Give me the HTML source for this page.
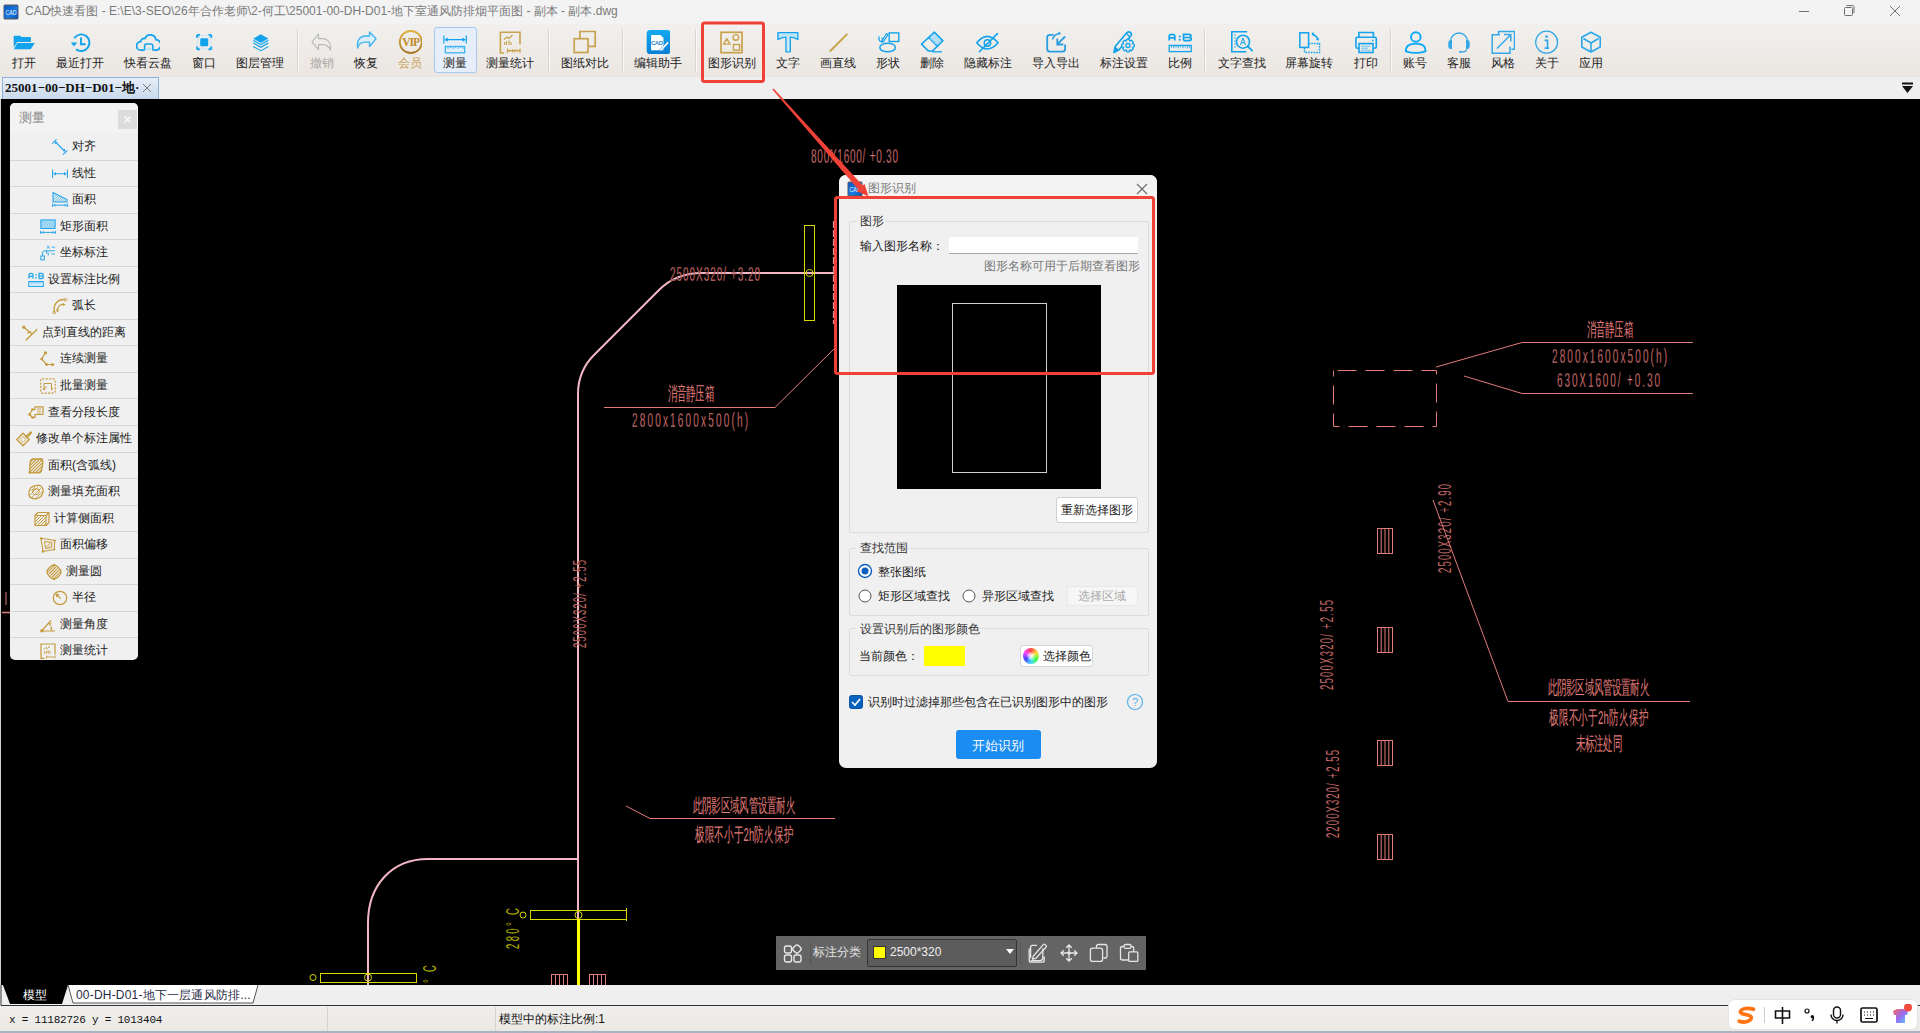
<!DOCTYPE html><html><head><meta charset="utf-8"><style>
*{box-sizing:border-box;margin:0;padding:0}
html,body{width:1920px;height:1033px;overflow:hidden;background:#000;font-family:"Liberation Sans",sans-serif;}
.abs{position:absolute}
#title{left:0;top:0;width:1920px;height:24px;background:#f3f3f3}
#tb{left:0;top:24px;width:1920px;height:53px;background:linear-gradient(#f1f0ee,#ebe6e1)}
.lbl{position:absolute;top:56px;font-size:12px;line-height:15px;color:#222;white-space:nowrap;transform:translateX(-50%)}
.ico{position:absolute;top:30px;width:24px;height:24px}
.sep{position:absolute;top:29px;width:1px;height:43px;background:#d8d4d0;box-shadow:1px 0 0 #faf8f6}
#tabbar{left:0;top:77px;width:1920px;height:22px;background:#efefef}
#canvas{left:1px;top:99px;width:1919px;height:886px;background:#000;overflow:hidden}
#btabs{left:0;top:985px;width:1920px;height:21px;background:#efefef}
#status{left:0;top:1006px;width:1920px;height:27px;background:linear-gradient(#f0efed,#ebe8e4)}
.row{position:absolute;left:0;width:128px;height:26.45px;border-bottom:2px solid #d9d9d9;background:#f0f0f0;font-size:13px;color:#222;white-space:nowrap}
.row span.t{position:absolute;top:5px}
.cadt{font-family:"Liberation Sans",sans-serif;fill:#e0736e}
</style></head><body>
<div id="title" class="abs">
<svg class="abs" style="left:3px;top:4px" width="16" height="16" viewBox="0 0 16 16"><defs><linearGradient id="ti" x1="0" y1="0" x2="1" y2="1"><stop offset="0" stop-color="#0a58c0"/><stop offset=".6" stop-color="#1a7ae0"/><stop offset="1" stop-color="#0a50b0"/></linearGradient></defs><rect x="0.5" y="0.5" width="15" height="15" rx="1.5" fill="#5a5a5a"/><rect x="1.3" y="1.6" width="13.4" height="12.8" fill="url(#ti)"/><text x="8" y="11" font-size="6.5" text-anchor="middle" fill="#e8f0ff" font-family="Liberation Sans" textLength="11" lengthAdjust="spacingAndGlyphs">CAD</text></svg>
<div class="abs" style="left:25px;top:3px;font-size:12px;line-height:17px;color:#7a7a7a;white-space:nowrap">CAD快速看图 - E:\E\3-SEO\26年合作老师\2-何工\25001-00-DH-D01-地下室通风防排烟平面图 - 副本 - 副本.dwg</div>
<svg class="abs" style="left:1790px;top:0" width="130" height="24" viewBox="1790 0 130 24" stroke="#6f6f6f" fill="none" stroke-width="1"><line x1="1799" y1="11.5" x2="1809" y2="11.5"/><rect x="1844.5" y="7.5" width="8" height="8" rx="1"/><path d="M1846.5 5.5h6a1.5 1.5 0 0 1 1.5 1.5v6"/><path d="M1890 6L1900 16M1900 6L1890 16"/></svg>
</div>
<div id="tb" class="abs"></div>
<div class="abs" style="left:434px;top:27px;width:43px;height:46px;border:1px solid #a8c8f0;border-radius:3px;background:#e6eff9"></div>
<div class="sep" style="left:297.0px"></div>
<div class="sep" style="left:547.5px"></div>
<div class="sep" style="left:621.5px"></div>
<div class="sep" style="left:695.0px"></div>
<div class="sep" style="left:1204.0px"></div>
<div class="sep" style="left:1390.0px"></div>
<svg class="ico" style="left:12px" viewBox="0 0 24 24"><path d="M1.7 7V6.5Q1.7 5.7 2.5 5.7H8.3L9.6 7H17.8Q18.9 7 18.9 8.2V12H5.2L1.7 17.5Z" fill="#12a3ec"/><path d="M5.4 13H22.9L18.7 19.3H1.8Z" fill="#12a3ec"/></svg>
<div class="lbl" style="left:24px;color:#222">打开</div>
<svg class="ico" style="left:68px" viewBox="0 0 24 24"><path d="M6.2 8.2A8.3 8.3 0 1 1 8 19.2" fill="none" stroke="#12a3ec" stroke-width="1.9"/><path d="M2.8 12.5H9.2L6 16.5Z" fill="#12a3ec"/><path d="M13 7.6V14.2H17.6" fill="none" stroke="#12a3ec" stroke-width="1.9"/></svg>
<div class="lbl" style="left:80px;color:#222">最近打开</div>
<svg class="ico" style="left:136px" viewBox="0 0 24 24"><path d="M7.5 20.2H5.2A4.3 4.3 0 0 1 4.6 11.6 3.8 3.8 0 0 1 9.1 8.4 5.6 5.6 0 0 1 19.8 9.6 5.3 5.3 0 0 1 19.5 20.2H18.2" fill="none" stroke="#12a3ec" stroke-width="1.8" stroke-linecap="round"/><path d="M8.6 20.5V16A2 2 0 0 1 10.6 14H14.8A2 2 0 0 1 16.8 16V20.5" fill="none" stroke="#12a3ec" stroke-width="1.6"/><rect x="9.3" y="17.6" width="6.8" height="2.4" fill="#bfe4f8"/></svg>
<div class="lbl" style="left:148px;color:#222">快看云盘</div>
<svg class="ico" style="left:192px" viewBox="0 0 24 24"><rect x="8.2" y="8.2" width="8" height="8" rx="1" fill="#12a3ec"/><path d="M5.2 8V6.2Q5.2 5.2 6.2 5.2H8M16.4 5.2H18.2Q19.2 5.2 19.2 6.2V8M19.2 16.4V18.2Q19.2 19.2 18.2 19.2H16.4M8 19.2H6.2Q5.2 19.2 5.2 18.2V16.4" fill="none" stroke="#12a3ec" stroke-width="2.2"/><path d="M6 6L8.5 8.5M18.4 6L16 8.5M18.4 18.4L16 16M6 18.4L8.5 16M7 5.6H17.4M5.6 7V17.4M18.8 7V17.4M7 18.8H17.4" stroke="#bfe4f8" stroke-width=".8"/></svg>
<div class="lbl" style="left:204px;color:#222">窗口</div>
<svg class="ico" style="left:248px" viewBox="0 0 24 24"><path d="M12.8 4.3L20.3 8.6 12.8 12.9 5.3 8.6Z" fill="#12a3ec"/><path d="M5.3 12.3L12.8 16.6 20.3 12.3 20.3 13.7 12.8 18 5.3 13.7Z" fill="#12a3ec"/><path d="M5.3 15.9L12.8 20.2 20.3 15.9 20.3 17.2 12.8 21.2 5.3 17.2Z" fill="#12a3ec"/><path d="M5.3 9.6L5.3 11 12.8 15.3 20.3 11 20.3 9.6 12.8 13.9Z" fill="#12a3ec"/></svg>
<div class="lbl" style="left:260px;color:#222">图层管理</div>
<svg class="ico" style="left:310px" viewBox="0 0 24 24"><path d="M2 11.8L8.5 4V8.6H12.5A7.8 7.8 0 0 1 20.5 16.6V20.5Q18.8 14.6 12.5 14.6H8.5V19.6Z" fill="none" stroke="#b8b8b8" stroke-width="1.1" stroke-linejoin="round"/></svg>
<div class="lbl" style="left:322px;color:#aaa">撤销</div>
<svg class="ico" style="left:354px" viewBox="0 0 24 24"><path d="M22 8.8L15.5 2V6H11.5A7.8 7.8 0 0 0 3.5 14V18Q5.2 12.2 11.5 12.2H15.5V16.5Z" fill="#d8eefa" stroke="#3fb2ee" stroke-width="1.3" stroke-linejoin="round"/></svg>
<div class="lbl" style="left:366px;color:#222">恢复</div>
<svg class="ico" style="left:398px" viewBox="0 0 24 24"><defs><linearGradient id="vg" x1="0" y1="0" x2="0" y2="1"><stop offset="0" stop-color="#e0b040"/><stop offset="1" stop-color="#a87828"/></linearGradient></defs><circle cx="12.8" cy="12" r="11" fill="none" stroke="url(#vg)" stroke-width="1.8"/><text x="12.6" y="16.3" font-size="11.5" text-anchor="middle" fill="#c08a28" font-family="Liberation Serif" font-weight="bold" letter-spacing="-1">VIP</text></svg>
<div class="lbl" style="left:410px;color:#c9a45a">会员</div>
<svg class="ico" style="left:442.5px" viewBox="0 0 24 24"><path d="M0.9 5.5V13.4M23.3 5.5V13.4M2 9.7H22.2" stroke="#12a3ec" stroke-width="1.2" fill="none"/><path d="M1.4 9.7L4.8 7.6V11.8ZM22.8 9.7L19.4 7.6V11.8Z" fill="#12a3ec"/><rect x="2.3" y="16.5" width="19.3" height="6.3" fill="none" stroke="#3ab4f0" stroke-width="1.3"/><path d="M5 16.5V19M7.5 16.5V18M10 16.5V19M12.5 16.5V18M15 16.5V19M17.5 16.5V18M20 16.5V19" stroke="#3ab4f0" stroke-width=".9"/></svg>
<div class="lbl" style="left:454.5px;color:#222">测量</div>
<svg class="ico" style="left:498px" viewBox="0 0 24 24"><path d="M6 23H2.4V2.2H22V14.5" fill="none" stroke="#c9a24e" stroke-width="1.6"/><path d="M6 9.5L9 7 11 8.5 14.5 5" fill="none" stroke="#c9a24e" stroke-width="1.3"/><path d="M6.5 12V15M8.5 11V15M11 10.5V15M13 12V15" stroke="#c9a24e" stroke-width="1.1"/><path d="M9.5 18.5V23M22 18.5V23M10 20.7H21.5" stroke="#c9a24e" stroke-width="1.2"/><path d="M10.5 20.7L12.5 19.3V22.1ZM21 20.7L19 19.3V22.1Z" fill="#c9a24e"/><path d="M14.5 19V22.5M17 19V22.5" stroke="#c9a24e" stroke-width="1"/></svg>
<div class="lbl" style="left:510px;color:#222">测量统计</div>
<svg class="ico" style="left:573px" viewBox="0 0 24 24"><path d="M6.9 7.9V1.5H22.2V16.3H15.8" fill="none" stroke="#c9a24e" stroke-width="1.7"/><rect x="1.2" y="8.7" width="13.8" height="13.8" fill="none" stroke="#c9a24e" stroke-width="1.7"/></svg>
<div class="lbl" style="left:585px;color:#222">图纸对比</div>
<svg class="ico" style="left:645.5px" viewBox="0 0 24 24"><defs><linearGradient id="eg" x1="0" y1="0" x2="0" y2="1"><stop offset="0" stop-color="#12a8f0"/><stop offset="1" stop-color="#0a7fd6"/></linearGradient></defs><rect x=".7" y="0" width="23.8" height="24.2" rx="3.5" fill="url(#eg)"/><path d="M5.1 5H14.5L17.5 8V20.3H5.1Z" fill="#fff"/><text x="10.8" y="14.6" font-size="6" text-anchor="middle" fill="#2a86d0" font-family="Liberation Sans" font-weight="bold" letter-spacing="-.4">CAD</text><path d="M14 19.5L21.5 11.5 23 13 15.5 21H14Z" fill="#fff" stroke="#2a86d0" stroke-width=".6"/></svg>
<div class="lbl" style="left:657.5px;color:#222">编辑助手</div>
<svg class="ico" style="left:720px" viewBox="0 0 24 24"><rect x="1" y="2.3" width="21" height="20.4" fill="none" stroke="#c9a24e" stroke-width="1.7"/><path d="M3.6 14.1L6.8 8.6 10 14.1Z" fill="none" stroke="#c9a24e" stroke-width="1.4" stroke-linejoin="round"/><circle cx="15.8" cy="7.4" r="2.8" fill="none" stroke="#c9a24e" stroke-width="1.4"/><rect x="13.4" y="14.5" width="6.2" height="5.7" fill="none" stroke="#c9a24e" stroke-width="1.4"/></svg>
<div class="lbl" style="left:732px;color:#222">图形识别</div>
<svg class="ico" style="left:776px" viewBox="0 0 24 24"><path d="M1.9 2.6H21.9V9.6L20.6 8.8Q17.4 7.2 14.3 7.2V21.8H10V7.2Q6.9 7.2 3.3 8.8L1.9 9.6Z" fill="#bfe4f8" stroke="#12a3ec" stroke-width="1.3" stroke-linejoin="round"/><path d="M12.1 7.5V21.5" stroke="#fff" stroke-width=".8" opacity=".7"/></svg>
<div class="lbl" style="left:788px;color:#222">文字</div>
<svg class="ico" style="left:826px" viewBox="0 0 24 24"><path d="M4.3 21L20.9 4.4" stroke="#c6a24a" stroke-width="1.9" stroke-linecap="round"/></svg>
<div class="lbl" style="left:838px;color:#222">画直线</div>
<svg class="ico" style="left:876px" viewBox="0 0 24 24"><rect x="13.2" y="2.9" width="9.6" height="8.6" fill="none" stroke="#12a3ec" stroke-width="1.4"/><ellipse cx="11.6" cy="17.5" rx="7.8" ry="4.3" fill="none" stroke="#12a3ec" stroke-width="1.5"/><path d="M3 7C2.5 10 4 11.8 5.5 11.5 7 11.2 6.5 9 6 8" fill="none" stroke="#12a3ec" stroke-width="1.3" stroke-linecap="round"/><path d="M6.2 10.5L10.5 3.5 12 4.5 7.7 11.5 6 12.2Z" fill="none" stroke="#12a3ec" stroke-width="1.2" stroke-linejoin="round"/></svg>
<div class="lbl" style="left:888px;color:#222">形状</div>
<svg class="ico" style="left:920px" viewBox="0 0 24 24"><path d="M14.3 2.2L22.8 10.7 12.4 21.1H8.5L1.5 14.1Z" fill="none" stroke="#12a3ec" stroke-width="1.5" stroke-linejoin="round"/><path d="M14.3 2.2L22.8 10.7 17.2 16.3 8.7 7.8Z" fill="#9fd6f5" stroke="#12a3ec" stroke-width="1.3"/><path d="M10.8 5.7L19.3 14.2M12.5 4L21 12.5M16 4.5L9.7 10.8M18 6.5L11.7 12.8M20 8.5L13.7 14.8" stroke="#e8f6fd" stroke-width=".5"/><path d="M12 21.8H22" stroke="#12a3ec" stroke-width="1.3"/></svg>
<div class="lbl" style="left:932px;color:#222">删除</div>
<svg class="ico" style="left:976px" viewBox="0 0 24 24"><path d="M0.8 12.7Q11.3 0 22 12.7 11.3 25.2 0.8 12.7Z" fill="none" stroke="#12a3ec" stroke-width="1.6"/><circle cx="11.4" cy="13" r="3.2" fill="none" stroke="#12a3ec" stroke-width="1.5"/><path d="M3.4 21.8L21.4 3.6" stroke="#12a3ec" stroke-width="1.6" stroke-linecap="round"/></svg>
<div class="lbl" style="left:988px;color:#222">隐藏标注</div>
<svg class="ico" style="left:1043.5px" viewBox="0 0 24 24"><path d="M9.5 4.8H6Q3.2 4.8 3.2 7.6V19Q3.2 21.7 6 21.7H18.3Q21.1 21.7 21.1 19V14.5" fill="none" stroke="#2a9ee0" stroke-width="1.8"/><path d="M21.1 6.5L13.5 14.2M13.3 8.5V14.5H19.3" fill="none" stroke="#2a9ee0" stroke-width="1.8"/><path d="M8.5 9.5C9.5 6 12 4 15.5 3.3" fill="none" stroke="#2a9ee0" stroke-width="1.6"/><path d="M14.5 1.5L17 3.3 14.8 5.3Z" fill="#2a9ee0"/></svg>
<div class="lbl" style="left:1055.5px;color:#222">导入导出</div>
<svg class="ico" style="left:1111.5px" viewBox="0 0 24 24"><path d="M2 22.5L3.2 16.5 14.8 2.8Q16.8 1 18.6 2.6 20.3 4.3 18.5 6.3L7 19.8Z" fill="none" stroke="#12a3ec" stroke-width="1.7" stroke-linejoin="round"/><path d="M2 22.5L3.2 16.5 7 19.8Z" fill="#12a3ec"/><path d="M14.5 3.5L18 7" stroke="#12a3ec" stroke-width="1.2"/><g transform="translate(16 15.5)"><path d="M-1.2-6.3H1.2L1.7-4.4 3.5-5.3 5.2-3.6 4.3-1.8 6.3-1.2V1.2L4.3 1.8 5.2 3.6 3.5 5.3 1.7 4.4 1.2 6.3H-1.2L-1.7 4.4-3.5 5.3-5.2 3.6-4.3 1.8-6.3 1.2V-1.2L-4.3-1.8-5.2-3.6-3.5-5.3-1.7-4.4Z" fill="#eeeae6" stroke="#12a3ec" stroke-width="1.3" stroke-linejoin="round"/><circle r="2" fill="none" stroke="#12a3ec" stroke-width="1.3"/></g></svg>
<div class="lbl" style="left:1123.5px;color:#222">标注设置</div>
<svg class="ico" style="left:1167.5px" viewBox="0 0 24 24"><path d="M1.2 10.6V6.3Q1.2 4.3 4 4.3 6.8 4.3 6.8 6.3V10.6M1.2 7.8H6.8" fill="none" stroke="#12a3ec" stroke-width="1.7"/><rect x="10.8" y="5.5" width="1.8" height="1.8" fill="#12a3ec"/><rect x="10.8" y="8.8" width="1.8" height="1.8" fill="#12a3ec"/><path d="M15.5 10.6V4.3H21Q23 4.3 23 6 23 7.5 21 7.5H15.5M21 7.5Q23.3 7.5 23.3 9 23.3 10.6 21 10.6H15.5" fill="none" stroke="#12a3ec" stroke-width="1.7"/><rect x="1.2" y="15.4" width="22" height="6.2" fill="none" stroke="#12a3ec" stroke-width="1.3"/><path d="M3.5 15.4V17.5M5.8 15.4V18.3M8.1 15.4V17.5M10.4 15.4V18.3M12.7 15.4V17.5M15 15.4V18.3M17.3 15.4V17.5M19.6 15.4V18.3M21.6 15.4V17.5" stroke="#12a3ec" stroke-width=".9"/></svg>
<div class="lbl" style="left:1179.5px;color:#222">比例</div>
<svg class="ico" style="left:1229.5px" viewBox="0 0 24 24"><path d="M16.3 2.5V1.8H1.8V21.7H16.3" fill="none" stroke="#12a3ec" stroke-width="1.6"/><path d="M4 5H6M4 8H6M4 11H6M4 14H6M4 17H6" stroke="#12a3ec" stroke-width=".8"/><circle cx="13" cy="11.7" r="6.5" fill="#eeebe7" stroke="#12a3ec" stroke-width="1.6"/><path d="M17.8 16.5L22.2 20.6" stroke="#12a3ec" stroke-width="1.8" stroke-linecap="round"/><path d="M10.5 15L13 8 15.5 15M11.3 12.8H14.7" fill="none" stroke="#12a3ec" stroke-width="1"/></svg>
<div class="lbl" style="left:1241.5px;color:#222">文字查找</div>
<svg class="ico" style="left:1297px" viewBox="0 0 24 24"><rect x="2.8" y="2.8" width="8.8" height="14.6" fill="none" stroke="#12a3ec" stroke-width="1.5"/><path d="M11.6 13.4H22.5V22.4H7.5V17.4" fill="none" stroke="#12a3ec" stroke-width="1.5" stroke-dasharray="1.6 1.1"/><path d="M15.2 4.2Q19 5 20.8 8.8" fill="none" stroke="#12a3ec" stroke-width="1.4"/><path d="M14.3 3L17.3 2.6 16 5.6ZM22.3 8L21.2 11 18.8 9Z" fill="#12a3ec"/></svg>
<div class="lbl" style="left:1309px;color:#222">屏幕旋转</div>
<svg class="ico" style="left:1353.5px" viewBox="0 0 24 24"><path d="M4.9 7.3V2.5H19.4V7.3" fill="none" stroke="#12a3ec" stroke-width="1.6"/><rect x="1.9" y="7.3" width="20.4" height="11" rx="1.6" fill="none" stroke="#12a3ec" stroke-width="1.6"/><rect x="5" y="13.6" width="14" height="8.9" fill="#eeebe7" stroke="#12a3ec" stroke-width="1.6"/><path d="M7 16.2H16.5M7 18.2H14M7 20.2H16.5" stroke="#6cc4f2" stroke-width="1"/><circle cx="18.8" cy="10.3" r=".9" fill="#12a3ec"/></svg>
<div class="lbl" style="left:1365.5px;color:#222">打印</div>
<svg class="ico" style="left:1402.5px" viewBox="0 0 24 24"><circle cx="12.8" cy="7" r="4.8" fill="none" stroke="#0aaaf5" stroke-width="1.9"/><path d="M2.8 21.3Q2.6 13.6 12.8 13.6 23 13.6 22.5 21.3Q12.8 24.5 2.8 21.3Z" fill="none" stroke="#0aaaf5" stroke-width="1.9" stroke-linejoin="round"/></svg>
<div class="lbl" style="left:1414.5px;color:#222">账号</div>
<svg class="ico" style="left:1447px" viewBox="0 0 24 24"><path d="M3.5 13.5V11.5A8.5 8.5 0 0 1 20.5 11.5V13.5" fill="none" stroke="#34a8e6" stroke-width="1.4"/><path d="M5 10H3.5Q1.2 10 1.2 14.5 1.2 19 3.5 19H5Z" fill="#34a8e6"/><path d="M19 10H20.5Q22.8 10 22.8 14.5 22.8 19 20.5 19H19Z" fill="#34a8e6"/><path d="M19.5 19.5Q19.5 21.8 16 21.8H13.8" fill="none" stroke="#34a8e6" stroke-width="1.3"/><rect x="12" y="21" width="3" height="1.8" rx=".9" fill="#34a8e6"/></svg>
<div class="lbl" style="left:1459px;color:#222">客服</div>
<svg class="ico" style="left:1490.5px" viewBox="0 0 24 24"><path d="M7.5 4.5V1.5H23.5V19.3H20.5" fill="none" stroke="#34a8e6" stroke-width="1.5"/><path d="M9 4.8H1.2V23.3H19V16.5" fill="none" stroke="#34a8e6" stroke-width="1.5"/><path d="M6 18.5L19.5 5M13 4.6H19.8V11.4" fill="none" stroke="#34a8e6" stroke-width="1.5"/></svg>
<div class="lbl" style="left:1502.5px;color:#222">风格</div>
<svg class="ico" style="left:1535px" viewBox="0 0 24 24"><circle cx="11.6" cy="12.2" r="11" fill="none" stroke="#34a8e6" stroke-width="1.3"/><circle cx="11.6" cy="6.6" r="1.3" fill="#34a8e6"/><path d="M9.5 10.3H12.5V17.8M9.5 18.2H14" fill="none" stroke="#34a8e6" stroke-width="1.7"/></svg>
<div class="lbl" style="left:1547px;color:#222">关于</div>
<svg class="ico" style="left:1579px" viewBox="0 0 24 24"><path d="M12 2.2L21.2 7.3V17L12 22 2.8 17V7.3Z" fill="none" stroke="#2aa8e8" stroke-width="1.6" stroke-linejoin="round"/><path d="M4.5 8.5L12 13 19.5 8.5M12 13V21" fill="none" stroke="#2aa8e8" stroke-width="1.6"/></svg>
<div class="lbl" style="left:1591px;color:#222">应用</div>
<div id="tabbar" class="abs">
<div class="abs" style="left:2px;top:0;width:157px;height:22px;border:1px solid #8fb0d8;border-bottom:none;background:linear-gradient(#e6eef8,#c9d9ec)"></div>
<div class="abs" style="left:5px;top:3px;font-family:'Liberation Serif',serif;font-weight:bold;font-size:13px;line-height:15px;color:#111;white-space:nowrap;letter-spacing:0px">25001−00−DH−D01−地·</div>
<svg class="abs" style="left:142px;top:6px" width="10" height="10"><path d="M1 1L9 9M9 1L1 9" stroke="#7a7a7a" stroke-width="1"/></svg>
<svg class="abs" style="left:1900px;top:4px" width="16" height="16" viewBox="0 0 16 16"><rect x="2" y="1.5" width="11" height="2" fill="#111"/><path d="M2 5h11l-5.5 7z" fill="#111"/></svg>
</div>
<div id="canvas" class="abs"></div>
<svg class="abs" style="left:0;top:99px" width="1920" height="886" viewBox="0 99 1920 886" id="cad"></svg>
<svg class="abs" style="left:0;top:99px" width="1920" height="886" viewBox="0 99 1920 886"><path d="M835 273H702C684 273 671 278 659 290L594 355C583 366 578 378 578 394V985" stroke="#f2b6c4" stroke-width="2" fill="none"/><path d="M578 859H428C392 859 368 885 368 923V985" stroke="#f2b6c4" stroke-width="2" fill="none"/><path d="M833.5 221V324" stroke="#e88a96" stroke-width="1.2" stroke-dasharray="7 2"/><rect x="804.5" y="225.5" width="10" height="95" stroke="#d8d800" stroke-width="1" fill="none"/><circle cx="809.5" cy="273" r="3.5" stroke="#d8d800" fill="none"/><rect x="530.5" y="910.5" width="96" height="9" stroke="#d8d800" stroke-width="1" fill="none"/><circle cx="578.5" cy="915" r="3.5" stroke="#d8d800" fill="none"/><circle cx="523" cy="915" r="3" stroke="#d8d800" fill="none"/><path d="M626.5 908v13" stroke="#d8d800"/><path d="M578.5 919V985" stroke="#ffff00" stroke-width="3"/><rect x="320.5" y="973.5" width="96" height="9" stroke="#d8d800" stroke-width="1" fill="none"/><circle cx="368" cy="977.5" r="3.5" stroke="#d8d800" fill="none"/><circle cx="313" cy="977.5" r="3" stroke="#d8d800" fill="none"/><g transform="translate(519 949) rotate(-90) scale(0.5 1)"><text x="0" y="0" font-size="19" fill="#d8d800" stroke="#000" stroke-width="0.3" textLength="82.0" lengthAdjust="spacing" font-family="Liberation Sans">280° C</text></g><g transform="translate(436 1006) rotate(-90) scale(0.5 1)"><text x="0" y="0" font-size="19" fill="#d8d800" stroke="#000" stroke-width="0.3" textLength="82.0" lengthAdjust="spacing" font-family="Liberation Sans">280° C</text></g><rect x="551.5" y="974.5" width="16" height="12" stroke="#e07c7a" fill="none"/><path d="M555.5 974v12" stroke="#e07c7a"/><path d="M559.5 974v12" stroke="#e07c7a"/><path d="M563.5 974v12" stroke="#e07c7a"/><rect x="589.5" y="974.5" width="16" height="12" stroke="#e07c7a" fill="none"/><path d="M593.5 974v12" stroke="#e07c7a"/><path d="M597.5 974v12" stroke="#e07c7a"/><path d="M601.5 974v12" stroke="#e07c7a"/><rect x="1377.5" y="528.5" width="15" height="25" stroke="#e07c7a" fill="none"/><path d="M1381.2 528v25" stroke="#e07c7a"/><path d="M1385.0 528v25" stroke="#e07c7a"/><path d="M1388.8 528v25" stroke="#e07c7a"/><rect x="1377.5" y="627.5" width="15" height="25" stroke="#e07c7a" fill="none"/><path d="M1381.2 627v25" stroke="#e07c7a"/><path d="M1385.0 627v25" stroke="#e07c7a"/><path d="M1388.8 627v25" stroke="#e07c7a"/><rect x="1377.5" y="740.5" width="15" height="25" stroke="#e07c7a" fill="none"/><path d="M1381.2 740v25" stroke="#e07c7a"/><path d="M1385.0 740v25" stroke="#e07c7a"/><path d="M1388.8 740v25" stroke="#e07c7a"/><rect x="1377.5" y="834.5" width="15" height="25" stroke="#e07c7a" fill="none"/><path d="M1381.2 834v25" stroke="#e07c7a"/><path d="M1385.0 834v25" stroke="#e07c7a"/><path d="M1388.8 834v25" stroke="#e07c7a"/><g transform="translate(811 162.5) scale(0.5 1)"><text x="0" y="0" font-size="20" fill="#e07c7a" stroke="#000" stroke-width="0.3" textLength="174.0" lengthAdjust="spacing" font-family="Liberation Sans">800X1600/ +0.30</text></g><g transform="translate(670 281) scale(0.5 1)"><text x="0" y="0" font-size="20" fill="#e07c7a" stroke="#000" stroke-width="0.3" textLength="180.0" lengthAdjust="spacing" font-family="Liberation Sans">2500X320/ +3.20</text></g><g transform="translate(668 400) scale(0.5 1)"><text x="0" y="0" font-size="19" fill="#e07c7a" stroke="#000" stroke-width="0" textLength="92.0" lengthAdjust="spacing" font-family="Liberation Sans">消音静压箱</text></g><path d="M604 407.5H775L835 348" stroke="#e07c7a" fill="none"/><g transform="translate(632 427) scale(0.5 1)"><text x="0" y="0" font-size="20" fill="#e07c7a" stroke="#000" stroke-width="0.3" textLength="232.0" lengthAdjust="spacing" font-family="Liberation Sans">2800x1600x500(h)</text></g><g transform="translate(586 648) rotate(-90) scale(0.5 1)"><text x="0" y="0" font-size="19" fill="#e07c7a" stroke="#000" stroke-width="0.3" textLength="176.0" lengthAdjust="spacing" font-family="Liberation Sans">2500X320/ +2.55</text></g><g transform="translate(693 811.5) scale(0.5 1)"><text x="0" y="0" font-size="19" fill="#e07c7a" stroke="#000" stroke-width="0" textLength="204.0" lengthAdjust="spacing" font-family="Liberation Sans">此阴影区域风管设置耐火</text></g><path d="M626 806L650 818.5H835" stroke="#e07c7a" fill="none"/><g transform="translate(695 841) scale(0.5 1)"><text x="0" y="0" font-size="19" fill="#e07c7a" stroke="#000" stroke-width="0" textLength="196.0" lengthAdjust="spacing" font-family="Liberation Sans">极限不小于2h防火保护</text></g><rect x="1333.5" y="370.5" width="103" height="56" stroke="#e07c7a" fill="none" stroke-dasharray="19 9" stroke-dashoffset="-4"/><g transform="translate(1587 336) scale(0.5 1)"><text x="0" y="0" font-size="19" fill="#e07c7a" stroke="#000" stroke-width="0" textLength="92.0" lengthAdjust="spacing" font-family="Liberation Sans">消音静压箱</text></g><path d="M1436 367L1522 342.5H1693M1464 376L1522 393.5H1693" stroke="#e07c7a" fill="none"/><g transform="translate(1552 363) scale(0.5 1)"><text x="0" y="0" font-size="20" fill="#e07c7a" stroke="#000" stroke-width="0.3" textLength="230.0" lengthAdjust="spacing" font-family="Liberation Sans">2800x1600x500(h)</text></g><g transform="translate(1557 387) scale(0.5 1)"><text x="0" y="0" font-size="20" fill="#e07c7a" stroke="#000" stroke-width="0.3" textLength="206.0" lengthAdjust="spacing" font-family="Liberation Sans">630X1600/ +0.30</text></g><g transform="translate(1451 573) rotate(-90) scale(0.5 1)"><text x="0" y="0" font-size="19" fill="#e07c7a" stroke="#000" stroke-width="0.3" textLength="178.0" lengthAdjust="spacing" font-family="Liberation Sans">2500X320/ +2.90</text></g><path d="M1433 500L1508 701.5H1690" stroke="#e07c7a" fill="none"/><g transform="translate(1548 693.5) scale(0.5 1)"><text x="0" y="0" font-size="19" fill="#e07c7a" stroke="#000" stroke-width="0" textLength="202.0" lengthAdjust="spacing" font-family="Liberation Sans">此阴影区域风管设置耐火</text></g><g transform="translate(1549 724) scale(0.5 1)"><text x="0" y="0" font-size="19" fill="#e07c7a" stroke="#000" stroke-width="0" textLength="198.0" lengthAdjust="spacing" font-family="Liberation Sans">极限不小于2h防火保护</text></g><g transform="translate(1576 750) scale(0.5 1)"><text x="0" y="0" font-size="19" fill="#e07c7a" stroke="#000" stroke-width="0" textLength="92.0" lengthAdjust="spacing" font-family="Liberation Sans">未标注处同</text></g><g transform="translate(1333 690) rotate(-90) scale(0.5 1)"><text x="0" y="0" font-size="19" fill="#e07c7a" stroke="#000" stroke-width="0.3" textLength="180.0" lengthAdjust="spacing" font-family="Liberation Sans">2500X320/ +2.55</text></g><g transform="translate(1339 838) rotate(-90) scale(0.5 1)"><text x="0" y="0" font-size="19" fill="#e07c7a" stroke="#000" stroke-width="0.3" textLength="176.0" lengthAdjust="spacing" font-family="Liberation Sans">2200X320/ +2.55</text></g><path d="M6 592v13" stroke="#e07c7a"/><path d="M2 612.5H10" stroke="#e07c7a" stroke-width="1.5"/></svg>
<div class="abs" style="left:10px;top:103px;width:128px;height:557px;background:#f0f0f0;border-radius:5px;overflow:hidden">
<div class="abs" style="left:0;top:0;width:128px;height:30px;background:#f3f3f3"></div>
<div class="abs" style="left:9px;top:6px;font-size:13px;line-height:17px;color:#8a8a8a">测量</div>
<div class="abs" style="left:108px;top:7px;width:19px;height:19px;background:#dcdcdc"></div><svg class="abs" style="left:114px;top:13px" width="7" height="7"><path d="M.5 .5l6 6M6.5 .5l-6 6" stroke="#fff" stroke-width="1.2"/></svg>
<div class="abs" style="left:0;top:31.00px;width:128px;height:26.5px;border-bottom:1.5px solid #d6d6d6"></div>
<svg class="abs" style="left:42.0px;top:36.00px" width="16" height="16" viewBox="0 0 16 16"><path d="M3.5 3L12.5 12" stroke="#2aa6ea" stroke-width="1.1"/><path d="M0.3 4.6L4.6 0.3M11 15.7L15.4 11.4" stroke="#2aa6ea" stroke-width="1.1"/><path d="M2.4 2.3L5.7 3.2 3.3 5.6ZM13.6 12.7L10.3 11.8 12.7 9.4Z" fill="#2aa6ea"/></svg>
<div class="abs" style="left:62.0px;top:36.00px;font-size:12px;line-height:15px;color:#222;white-space:nowrap">对齐</div>
<div class="abs" style="left:0;top:57.55px;width:128px;height:26.5px;border-bottom:1.5px solid #d6d6d6"></div>
<svg class="abs" style="left:42.0px;top:62.55px" width="16" height="16" viewBox="0 0 16 16"><path d="M0.6 3.5V12M15.4 3.5V12M2 7.8H14" stroke="#2aa6ea" stroke-width="1.1"/><path d="M1 7.8L4 6V9.6ZM15 7.8L12 6V9.6Z" fill="#2aa6ea"/></svg>
<div class="abs" style="left:62.0px;top:62.55px;font-size:12px;line-height:15px;color:#222;white-space:nowrap">线性</div>
<div class="abs" style="left:0;top:84.10px;width:128px;height:26.5px;border-bottom:1.5px solid #d6d6d6"></div>
<svg class="abs" style="left:42.0px;top:89.10px" width="16" height="16" viewBox="0 0 16 16"><clipPath id="pc3"><path d="M1 .6L15 7.6V10H1Z"/></clipPath><path d="M1 .6L15 7.6V10H1Z" fill="none" stroke="#2aa6ea" stroke-width="1.1"/><g clip-path="url(#pc3)"><path d="M-14.4 10L-4.4 0" stroke="#2aa6ea" stroke-width=".7"/><path d="M-12.0 10L-2.0 0" stroke="#2aa6ea" stroke-width=".7"/><path d="M-9.6 10L0.4 0" stroke="#2aa6ea" stroke-width=".7"/><path d="M-7.2 10L2.8 0" stroke="#2aa6ea" stroke-width=".7"/><path d="M-4.8 10L5.2 0" stroke="#2aa6ea" stroke-width=".7"/><path d="M-2.4 10L7.6 0" stroke="#2aa6ea" stroke-width=".7"/><path d="M0.0 10L10.0 0" stroke="#2aa6ea" stroke-width=".7"/><path d="M2.4 10L12.4 0" stroke="#2aa6ea" stroke-width=".7"/><path d="M4.8 10L14.8 0" stroke="#2aa6ea" stroke-width=".7"/><path d="M7.2 10L17.2 0" stroke="#2aa6ea" stroke-width=".7"/><path d="M9.6 10L19.6 0" stroke="#2aa6ea" stroke-width=".7"/><path d="M12.0 10L22.0 0" stroke="#2aa6ea" stroke-width=".7"/><path d="M14.4 10L24.4 0" stroke="#2aa6ea" stroke-width=".7"/><path d="M16.8 10L26.8 0" stroke="#2aa6ea" stroke-width=".7"/></g><path d="M.6 11.5V15M15.4 11.5V15M1.5 13.2H14.5" stroke="#2aa6ea" stroke-width="1"/><path d="M1 13.2L3.5 11.9V14.5ZM15 13.2L12.5 11.9V14.5Z" fill="#2aa6ea"/></svg>
<div class="abs" style="left:62.0px;top:89.10px;font-size:12px;line-height:15px;color:#222;white-space:nowrap">面积</div>
<div class="abs" style="left:0;top:110.65px;width:128px;height:26.5px;border-bottom:1.5px solid #d6d6d6"></div>
<svg class="abs" style="left:30.0px;top:115.65px" width="16" height="16" viewBox="0 0 16 16"><rect x=".9" y=".9" width="14.2" height="8.6" fill="#bfe4f8" stroke="#2aa6ea" stroke-width="1"/><g opacity=".9"><path d="M-8.6 9.5L0.0 .9" stroke="#2aa6ea" stroke-width=".6"/><path d="M-6.2 9.5L2.4 .9" stroke="#2aa6ea" stroke-width=".6"/><path d="M-3.8 9.5L4.8 .9" stroke="#2aa6ea" stroke-width=".6"/><path d="M-1.4 9.5L7.2 .9" stroke="#2aa6ea" stroke-width=".6"/><path d="M1.0 9.5L9.6 .9" stroke="#2aa6ea" stroke-width=".6"/><path d="M3.4 9.5L12.0 .9" stroke="#2aa6ea" stroke-width=".6"/><path d="M5.8 9.5L14.4 .9" stroke="#2aa6ea" stroke-width=".6"/><path d="M8.2 9.5L16.8 .9" stroke="#2aa6ea" stroke-width=".6"/><path d="M10.6 9.5L19.2 .9" stroke="#2aa6ea" stroke-width=".6"/><path d="M13.0 9.5L21.6 .9" stroke="#2aa6ea" stroke-width=".6"/></g><rect x=".9" y=".9" width="14.2" height="8.6" fill="none" stroke="#f0f0f0" stroke-width="0" /><path d="M.6 11.8V15M15.4 11.8V15M1.5 13.4H14.5" stroke="#2aa6ea" stroke-width="1"/><path d="M1 13.4L3.5 12.1V14.7ZM15 13.4L12.5 12.1V14.7Z" fill="#2aa6ea"/></svg>
<div class="abs" style="left:50.0px;top:115.65px;font-size:12px;line-height:15px;color:#222;white-space:nowrap">矩形面积</div>
<div class="abs" style="left:0;top:137.20px;width:128px;height:26.5px;border-bottom:1.5px solid #d6d6d6"></div>
<svg class="abs" style="left:30.0px;top:142.20px" width="16" height="16" viewBox="0 0 16 16"><rect x=".8" y="11" width="3.6" height="3.8" fill="none" stroke="#2aa6ea" stroke-width="1"/><path d="M2.6 11V8Q2.6 5.8 5 5.8H15M6.5 5.8V8.5" fill="none" stroke="#2aa6ea" stroke-width="1"/><path d="M7 .8L9.5 3.6M9.5 .8L7 3.6M11.5 2.2H15M7 7.5L8.2 8.8 9.5 7.5M8.2 8.8V10.5M11.5 9H15" stroke="#2aa6ea" stroke-width=".9" fill="none"/></svg>
<div class="abs" style="left:50.0px;top:142.20px;font-size:12px;line-height:15px;color:#222;white-space:nowrap">坐标标注</div>
<div class="abs" style="left:0;top:163.75px;width:128px;height:26.5px;border-bottom:1.5px solid #d6d6d6"></div>
<svg class="abs" style="left:18.0px;top:168.75px" width="16" height="16" viewBox="0 0 16 16"><path d="M1 6.5V3Q1 1.4 3 1.4 5 1.4 5 3V6.5M1 4.4H5" fill="none" stroke="#2aa6ea" stroke-width="1.3"/><rect x="7.3" y="2.3" width="1.4" height="1.4" fill="#2aa6ea"/><rect x="7.3" y="5" width="1.4" height="1.4" fill="#2aa6ea"/><path d="M11 6.5V1.4H14Q15.2 1.4 15.2 2.7 15.2 3.9 14 3.9H11M14 3.9Q15.4 3.9 15.4 5.2 15.4 6.5 14 6.5H11" fill="none" stroke="#2aa6ea" stroke-width="1.3"/><rect x=".7" y="9.5" width="14.6" height="5" fill="#cfeafa" stroke="#2aa6ea" stroke-width="1"/><path d="M3 9.5V11.5M5 9.5V11M7 9.5V11.5M9 9.5V11M11 9.5V11.5M13 9.5V11" stroke="#2aa6ea" stroke-width=".7"/></svg>
<div class="abs" style="left:38.0px;top:168.75px;font-size:12px;line-height:15px;color:#222;white-space:nowrap">设置标注比例</div>
<div class="abs" style="left:0;top:190.30px;width:128px;height:26.5px;border-bottom:1.5px solid #d6d6d6"></div>
<svg class="abs" style="left:42.0px;top:195.30px" width="16" height="16" viewBox="0 0 16 16"><path d="M2.2 14.5V11A9 9 0 0 1 11.5 1.5H13" fill="none" stroke="#c49a3c" stroke-width="1.3"/><path d="M5.5 14V12.5A5.5 5.5 0 0 1 11.5 6.5" fill="none" stroke="#c49a3c" stroke-width="1.2"/><circle cx="13.6" cy="1.8" r="1.3" fill="none" stroke="#c49a3c" stroke-width=".9"/><circle cx="2.2" cy="14.6" r="1.3" fill="none" stroke="#c49a3c" stroke-width=".9"/><path d="M4 11.5L5.5 14.5 7 11.5ZM10.8 5L13.8 6.5 10.8 8Z" fill="#c49a3c"/></svg>
<div class="abs" style="left:62.0px;top:195.30px;font-size:12px;line-height:15px;color:#222;white-space:nowrap">弧长</div>
<div class="abs" style="left:0;top:216.85px;width:128px;height:26.5px;border-bottom:1.5px solid #d6d6d6"></div>
<svg class="abs" style="left:12.0px;top:221.85px" width="16" height="16" viewBox="0 0 16 16"><circle cx="1.8" cy="2.2" r="1.6" fill="#c49a3c"/><path d="M1.8 2.2L7.5 7M15.2 4.2L3.8 15.2M5.5 8.5L8 6.5 9.5 9" stroke="#c49a3c" stroke-width="1.3" fill="none"/></svg>
<div class="abs" style="left:32.0px;top:221.85px;font-size:12px;line-height:15px;color:#222;white-space:nowrap">点到直线的距离</div>
<div class="abs" style="left:0;top:243.40px;width:128px;height:26.5px;border-bottom:1.5px solid #d6d6d6"></div>
<svg class="abs" style="left:30.0px;top:248.40px" width="16" height="16" viewBox="0 0 16 16"><circle cx="5.5" cy="1.8" r="1.6" fill="#c49a3c"/><circle cx="1.6" cy="8" r="1.3" fill="#c49a3c"/><circle cx="6.5" cy="13.5" r="1.4" fill="#c49a3c"/><circle cx="12.5" cy="13.5" r="1.6" fill="#c49a3c"/><path d="M5.5 1.8L1.6 8 6.5 13.5H12.5" fill="none" stroke="#c49a3c" stroke-width="1.2"/></svg>
<div class="abs" style="left:50.0px;top:248.40px;font-size:12px;line-height:15px;color:#222;white-space:nowrap">连续测量</div>
<div class="abs" style="left:0;top:269.95px;width:128px;height:26.5px;border-bottom:1.5px solid #d6d6d6"></div>
<svg class="abs" style="left:30.0px;top:274.95px" width="16" height="16" viewBox="0 0 16 16"><rect x=".8" y=".8" width="14.4" height="14.4" rx="1.5" fill="none" stroke="#c49a3c" stroke-width="1.2" stroke-dasharray="2 1.4"/><path d="M4 5.5H11.5V12M4 5.5V12M6.5 8.5L4 12 2.8 10.5M11.5 12L13.2 10.5" fill="none" stroke="#c49a3c" stroke-width="1"/></svg>
<div class="abs" style="left:50.0px;top:274.95px;font-size:12px;line-height:15px;color:#222;white-space:nowrap">批量测量</div>
<div class="abs" style="left:0;top:296.50px;width:128px;height:26.5px;border-bottom:1.5px solid #d6d6d6"></div>
<svg class="abs" style="left:18.0px;top:301.50px" width="16" height="16" viewBox="0 0 16 16"><path d="M1.5 9.5L4.5 4.5H7V1.8H15V9.5H7V12.5H4.5Z" fill="none" stroke="#c49a3c" stroke-width="1.2" stroke-linejoin="round"/><path d="M9 4H13M9 6H13M9 8H13" stroke="#c49a3c" stroke-width=".8"/><circle cx="4.5" cy="4.5" r="1.3" fill="#c49a3c"/><circle cx="1.5" cy="9.5" r="1.3" fill="#c49a3c"/><circle cx="4.5" cy="12.5" r="1.3" fill="#c49a3c"/></svg>
<div class="abs" style="left:38.0px;top:301.50px;font-size:12px;line-height:15px;color:#222;white-space:nowrap">查看分段长度</div>
<div class="abs" style="left:0;top:323.05px;width:128px;height:26.5px;border-bottom:1.5px solid #d6d6d6"></div>
<svg class="abs" style="left:6.0px;top:328.05px" width="16" height="16" viewBox="0 0 16 16"><path d="M.8 8.5L7 2.3 13.2 8.5 7 14.7Z" fill="none" stroke="#c49a3c" stroke-width="1.3" stroke-linejoin="round"/><path d="M4 8.5L7 5.5 10 8.5 7 11.5Z" fill="none" stroke="#c49a3c" stroke-width=".8"/><path d="M9.5 6L14.5 1 15.5 2 10.5 7" fill="none" stroke="#c49a3c" stroke-width="1.1"/><circle cx="14.8" cy="1.5" r="1.1" fill="#c49a3c"/></svg>
<div class="abs" style="left:26.0px;top:328.05px;font-size:12px;line-height:15px;color:#222;white-space:nowrap">修改单个标注属性</div>
<div class="abs" style="left:0;top:349.60px;width:128px;height:26.5px;border-bottom:1.5px solid #d6d6d6"></div>
<svg class="abs" style="left:18.0px;top:354.60px" width="16" height="16" viewBox="0 0 16 16"><clipPath id="pc13"><path d="M1.5 14.5L2.2 4Q2.5 1 6 1H13Q15 1.5 14.8 5L13.5 12.5Q13 14.8 10 14.8Z"/></clipPath><path d="M1.5 14.5L2.2 4Q2.5 1 6 1H13Q15 1.5 14.8 5L13.5 12.5Q13 14.8 10 14.8Z" fill="none" stroke="#c49a3c" stroke-width="1.3"/><g clip-path="url(#pc13)"><path d="M-12.8 16L2.2 1" stroke="#c49a3c" stroke-width="1.1"/><path d="M-9.6 16L5.4 1" stroke="#c49a3c" stroke-width="1.1"/><path d="M-6.4 16L8.6 1" stroke="#c49a3c" stroke-width="1.1"/><path d="M-3.2 16L11.8 1" stroke="#c49a3c" stroke-width="1.1"/><path d="M0.0 16L15.0 1" stroke="#c49a3c" stroke-width="1.1"/><path d="M3.2 16L18.2 1" stroke="#c49a3c" stroke-width="1.1"/><path d="M6.4 16L21.4 1" stroke="#c49a3c" stroke-width="1.1"/><path d="M9.6 16L24.6 1" stroke="#c49a3c" stroke-width="1.1"/><path d="M12.8 16L27.8 1" stroke="#c49a3c" stroke-width="1.1"/></g><circle cx="13.3" cy="1.3" r="1.2" fill="#c49a3c"/><circle cx="1.8" cy="14.5" r="1.2" fill="#c49a3c"/></svg>
<div class="abs" style="left:38.0px;top:354.60px;font-size:12px;line-height:15px;color:#222;white-space:nowrap">面积(含弧线)</div>
<div class="abs" style="left:0;top:376.15px;width:128px;height:26.5px;border-bottom:1.5px solid #d6d6d6"></div>
<svg class="abs" style="left:18.0px;top:381.15px" width="16" height="16" viewBox="0 0 16 16"><path d="M2.5 4Q6 .5 12 1.5 15.5 3 15 8 14 14 8 14.8 2 15 1 11 0.5 7 2.5 4Z" fill="none" stroke="#c49a3c" stroke-width="1.3"/><path d="M5 6Q8 3.5 11 5.5 12 8.5 9.5 10.5 6 11.5 4.5 9Z" fill="none" stroke="#c49a3c" stroke-width="1"/><path d="M3 7L7 3M2 11L10 3M4 13L13 4M8 14L14 8M11 11L12 10" stroke="#c49a3c" stroke-width=".8"/></svg>
<div class="abs" style="left:38.0px;top:381.15px;font-size:12px;line-height:15px;color:#222;white-space:nowrap">测量填充面积</div>
<div class="abs" style="left:0;top:402.70px;width:128px;height:26.5px;border-bottom:1.5px solid #d6d6d6"></div>
<svg class="abs" style="left:24.0px;top:407.70px" width="16" height="16" viewBox="0 0 16 16"><path d="M1 4.5L4 1.5H15V11.5L12 14.5H1Z" fill="none" stroke="#c49a3c" stroke-width="1.2" stroke-linejoin="round"/><path d="M1 4.5H12V14.5M12 4.5L15 1.5" fill="none" stroke="#c49a3c" stroke-width="1.1"/><clipPath id="pc15"><rect x="1" y="4.5" width="11" height="10"/></clipPath><g clip-path="url(#pc15)"><path d="M-9.0 15L1.0 5" stroke="#c49a3c" stroke-width="1"/><path d="M-6.0 15L4.0 5" stroke="#c49a3c" stroke-width="1"/><path d="M-3.0 15L7.0 5" stroke="#c49a3c" stroke-width="1"/><path d="M0.0 15L10.0 5" stroke="#c49a3c" stroke-width="1"/><path d="M3.0 15L13.0 5" stroke="#c49a3c" stroke-width="1"/><path d="M6.0 15L16.0 5" stroke="#c49a3c" stroke-width="1"/><path d="M9.0 15L19.0 5" stroke="#c49a3c" stroke-width="1"/></g></svg>
<div class="abs" style="left:44.0px;top:407.70px;font-size:12px;line-height:15px;color:#222;white-space:nowrap">计算侧面积</div>
<div class="abs" style="left:0;top:429.25px;width:128px;height:26.5px;border-bottom:1.5px solid #d6d6d6"></div>
<svg class="abs" style="left:30.0px;top:434.25px" width="16" height="16" viewBox="0 0 16 16"><path d="M1 1.3L14.8 3.5 14.2 12.5 3 14.5Z" fill="none" stroke="#c49a3c" stroke-width="1.1" stroke-linejoin="round"/><path d="M4.5 4.5L12 5.5 11.5 10.5 5.5 11.5Z" fill="none" stroke="#c49a3c" stroke-width="1"/><path d="M6 10L10 6M7.5 11L11 7.5" stroke="#c49a3c" stroke-width=".8"/><circle cx="1.3" cy="1.5" r="1.2" fill="#c49a3c"/><circle cx="14.8" cy="3.5" r="1.1" fill="#c49a3c"/><circle cx="14.2" cy="12.5" r="1.1" fill="#c49a3c"/><circle cx="3" cy="14.5" r="1.2" fill="#c49a3c"/></svg>
<div class="abs" style="left:50.0px;top:434.25px;font-size:12px;line-height:15px;color:#222;white-space:nowrap">面积偏移</div>
<div class="abs" style="left:0;top:455.80px;width:128px;height:26.5px;border-bottom:1.5px solid #d6d6d6"></div>
<svg class="abs" style="left:36.0px;top:460.80px" width="16" height="16" viewBox="0 0 16 16"><clipPath id="pc17"><path d="M8 1L15 8 8 15 1 8Z"/></clipPath><path d="M8 1Q10 1 12.5 3.5 15 6 15 8 15 10 12.5 12.5 10 15 8 15 6 15 3.5 12.5 1 10 1 8 1 6 3.5 3.5 6 1 8 1Z" fill="none" stroke="#c49a3c" stroke-width="1.3"/><g clip-path="url(#pc17)"><path d="M-12.8 16L2.2 1" stroke="#c49a3c" stroke-width="1.2"/><path d="M-9.6 16L5.4 1" stroke="#c49a3c" stroke-width="1.2"/><path d="M-6.4 16L8.6 1" stroke="#c49a3c" stroke-width="1.2"/><path d="M-3.2 16L11.8 1" stroke="#c49a3c" stroke-width="1.2"/><path d="M0.0 16L15.0 1" stroke="#c49a3c" stroke-width="1.2"/><path d="M3.2 16L18.2 1" stroke="#c49a3c" stroke-width="1.2"/><path d="M6.4 16L21.4 1" stroke="#c49a3c" stroke-width="1.2"/><path d="M9.6 16L24.6 1" stroke="#c49a3c" stroke-width="1.2"/><path d="M12.8 16L27.8 1" stroke="#c49a3c" stroke-width="1.2"/></g><circle cx="8" cy="1" r="1.1" fill="#c49a3c"/><circle cx="8" cy="15" r="1.1" fill="#c49a3c"/></svg>
<div class="abs" style="left:56.0px;top:460.80px;font-size:12px;line-height:15px;color:#222;white-space:nowrap">测量圆</div>
<div class="abs" style="left:0;top:482.35px;width:128px;height:26.5px;border-bottom:1.5px solid #d6d6d6"></div>
<svg class="abs" style="left:42.0px;top:487.35px" width="16" height="16" viewBox="0 0 16 16"><circle cx="8" cy="8" r="6.7" fill="none" stroke="#c49a3c" stroke-width="1.2"/><path d="M4.2 4.2L8.5 8.5" stroke="#c49a3c" stroke-width="1.1"/><path d="M3.7 3.7L7.5 4.2 4.2 7.5Z" fill="#c49a3c"/></svg>
<div class="abs" style="left:62.0px;top:487.35px;font-size:12px;line-height:15px;color:#222;white-space:nowrap">半径</div>
<div class="abs" style="left:0;top:508.90px;width:128px;height:26.5px;border-bottom:1.5px solid #d6d6d6"></div>
<svg class="abs" style="left:30.0px;top:513.90px" width="16" height="16" viewBox="0 0 16 16"><path d="M1.5 14H15M1.5 14L11 3.5" stroke="#c49a3c" stroke-width="1.2"/><circle cx="1.8" cy="13.8" r="1.7" fill="#c49a3c"/><path d="M9 6.5Q12 9 11.5 14" fill="none" stroke="#c49a3c" stroke-width="1"/><path d="M9.5 6L11.5 6 11 8ZM10.5 11L12.5 11.5 11 13Z" fill="#c49a3c"/></svg>
<div class="abs" style="left:50.0px;top:513.90px;font-size:12px;line-height:15px;color:#222;white-space:nowrap">测量角度</div>
<div class="abs" style="left:0;top:535.45px;width:128px;height:26.5px;border-bottom:1.5px solid #d6d6d6"></div>
<svg class="abs" style="left:30.0px;top:540.45px" width="16" height="16" viewBox="0 0 16 16"><path d="M4.5 15.3H1V1H15V11.5" fill="none" stroke="#c49a3c" stroke-width="1.2"/><path d="M4 6.5L6 4.5 7.5 5.5 10 3" fill="none" stroke="#c49a3c" stroke-width="1"/><path d="M4.5 8.5V10.5M6.3 8V10.5M8.1 7.5V10.5M9.9 8V10.5" stroke="#c49a3c" stroke-width="1"/><path d="M6.5 12.5V15.5M15 12.5V15.5M7 14H14.5" stroke="#c49a3c" stroke-width=".9"/></svg>
<div class="abs" style="left:50.0px;top:540.45px;font-size:12px;line-height:15px;color:#222;white-space:nowrap">测量统计</div>
</div>
<svg class="abs" style="left:0;top:0" width="1920" height="1033" viewBox="0 0 1920 1033"><rect x="702.5" y="23" width="61" height="58.5" rx="2" fill="none" stroke="#ef4136" stroke-width="3"/></svg>
<div class="abs" style="left:839px;top:175px;width:318px;height:593px;background:#f0f0f0;border-radius:7px;overflow:hidden">
<div class="abs" style="left:0;top:0;width:318px;height:23px;background:#f3f3f3"></div>
</div>
<svg class="abs" style="left:847px;top:181px" width="16" height="16" viewBox="0 0 16 16"><rect x="0.5" y="0.5" width="15" height="15" rx="1.5" fill="#5a5a5a"/><rect x="1.3" y="1.6" width="13.4" height="12.8" fill="url(#ti)"/><text x="8" y="11" font-size="6.5" text-anchor="middle" fill="#e8f0ff" font-family="Liberation Sans" textLength="11" lengthAdjust="spacingAndGlyphs">CAD</text></svg><div class="abs" style="left:868px;top:181px;font-size:12px;line-height:15px;color:#7a7a7a;white-space:nowrap;">图形识别</div><svg class="abs" style="left:1136px;top:183px" width="12" height="12"><path d="M1 1l10 10M11 1L1 11" stroke="#6a6a6a" stroke-width="1.1"/></svg><div class="abs" style="left:849px;top:221px;width:300px;height:312px;border:1px solid #dcdcdc;border-radius:2px"></div><div class="abs" style="left:856px;top:220px;width:30px;height:3px;background:#f0f0f0"></div><div class="abs" style="left:860px;top:214px;font-size:12px;line-height:15px;color:#333;white-space:nowrap;">图形</div><div class="abs" style="left:860px;top:239px;font-size:12px;line-height:15px;color:#222;white-space:nowrap;">输入图形名称：</div><div class="abs" style="left:949px;top:237px;width:189px;height:17px;background:#fff;border-bottom:1px solid #a8a8a8"></div><div class="abs" style="left:984px;top:259px;font-size:12px;line-height:15px;color:#777;white-space:nowrap;">图形名称可用于后期查看图形</div><div class="abs" style="left:897px;top:285px;width:204px;height:204px;background:#000"></div><div class="abs" style="left:952px;top:303px;width:95px;height:170px;border:1px solid #cfcfcf"></div><div class="abs" style="left:1056px;top:497px;width:82px;height:26px;background:#fff;border:1px solid #d0d0d0;border-radius:3px"></div><div class="abs" style="left:1061px;top:503px;font-size:12px;line-height:15px;color:#222;white-space:nowrap;">重新选择图形</div><div class="abs" style="left:849px;top:548px;width:300px;height:68px;border:1px solid #dcdcdc;border-radius:2px"></div><div class="abs" style="left:856px;top:547px;width:52px;height:3px;background:#f0f0f0"></div><div class="abs" style="left:860px;top:541px;font-size:12px;line-height:15px;color:#333;white-space:nowrap;">查找范围</div><svg class="abs" style="left:857px;top:563px" width="16" height="16"><circle cx="8" cy="8" r="6.5" fill="#fff" stroke="#0a60c0" stroke-width="1.4"/><circle cx="8" cy="8" r="3.5" fill="#0a60c0"/></svg><div class="abs" style="left:878px;top:565px;font-size:12px;line-height:15px;color:#222;white-space:nowrap;">整张图纸</div><svg class="abs" style="left:857px;top:588px" width="16" height="16"><circle cx="8" cy="8" r="6" fill="#fff" stroke="#555" stroke-width="1"/></svg><div class="abs" style="left:878px;top:589px;font-size:12px;line-height:15px;color:#222;white-space:nowrap;">矩形区域查找</div><svg class="abs" style="left:961px;top:588px" width="16" height="16"><circle cx="8" cy="8" r="6" fill="#fff" stroke="#555" stroke-width="1"/></svg><div class="abs" style="left:982px;top:589px;font-size:12px;line-height:15px;color:#222;white-space:nowrap;">异形区域查找</div><div class="abs" style="left:1067px;top:586px;width:71px;height:20px;background:#f6f6f6;border:1px solid #e8e8e8;border-radius:2px"></div><div class="abs" style="left:1078px;top:589px;font-size:12px;line-height:15px;color:#aaa;white-space:nowrap;">选择区域</div><div class="abs" style="left:849px;top:628px;width:300px;height:48px;border:1px solid #dcdcdc;border-radius:2px"></div><div class="abs" style="left:856px;top:627px;width:124px;height:3px;background:#f0f0f0"></div><div class="abs" style="left:860px;top:622px;font-size:12px;line-height:15px;color:#333;white-space:nowrap;">设置识别后的图形颜色</div><div class="abs" style="left:859px;top:649px;font-size:12px;line-height:15px;color:#222;white-space:nowrap;">当前颜色：</div><div class="abs" style="left:924px;top:646px;width:41px;height:20px;background:#ffff00"></div><div class="abs" style="left:1020px;top:645px;width:73px;height:22px;background:#fff;border:1px solid #d4d4d4;border-radius:3px"></div><div class="abs" style="left:1023px;top:648px;width:16px;height:16px;border-radius:50%;background:conic-gradient(#f44,#fd4,#4f4,#4df,#44f,#f4f,#f44)"></div><div class="abs" style="left:1027px;top:652px;width:8px;height:8px;border-radius:50%;background:radial-gradient(#fff,rgba(255,255,255,0))"></div><div class="abs" style="left:1043px;top:649px;font-size:12px;line-height:15px;color:#222;white-space:nowrap;">选择颜色</div><svg class="abs" style="left:849px;top:695px" width="14" height="14"><rect x=".5" y=".5" width="13" height="13" rx="2" fill="#0a62c0" stroke="#0a55a8"/><path d="M3 7l3 3 5-6" stroke="#fff" stroke-width="1.6" fill="none"/></svg><div class="abs" style="left:868px;top:695px;font-size:12px;line-height:15px;color:#222;white-space:nowrap;">识别时过滤掉那些包含在已识别图形中的图形</div><svg class="abs" style="left:1126px;top:693px" width="18" height="18"><circle cx="9" cy="9" r="7.5" fill="none" stroke="#56b0ee" stroke-width="1.2"/><text x="9" y="13" font-size="11" text-anchor="middle" fill="#56b0ee" font-family="Liberation Sans">?</text></svg><div class="abs" style="left:956px;top:730px;width:85px;height:29px;background:#1a8cf2;border-radius:3px"></div><div class="abs" style="left:972px;top:738px;font-size:13px;line-height:15px;color:#fff;white-space:nowrap;">开始识别</div>
<svg class="abs" style="left:0;top:0" width="1920" height="1033" viewBox="0 0 1920 1033"><rect x="835.5" y="197.5" width="318" height="176" rx="2" fill="none" stroke="#ef4136" stroke-width="3"/><path d="M773.6 88.5 L862.8 185.5 L864.6 183.9 L868.5 196.5 L856.5 191.1 L858.3 189.5 L772.4 89.5Z" fill="#ef4136"/></svg>
<div class="abs" style="left:776px;top:936px;width:370px;height:34px;background:#646464"></div>
<svg class="abs" style="left:783px;top:944px" width="20" height="20" viewBox="0 0 20 20" fill="none" stroke="#e8e8e8" stroke-width="1.4"><rect x="1.5" y="2" width="7" height="7" rx="2"/><rect x="1.5" y="11" width="7" height="7" rx="2"/><rect x="11" y="11" width="7" height="7" rx="2"/><rect x="10.5" y="1.5" width="7" height="7" rx="2" transform="rotate(45 14 5)"/></svg>
<div class="abs" style="left:810px;top:942px;width:1px;height:22px;background:#555"></div>
<div class="abs" style="left:813px;top:945px;font-size:12px;line-height:15px;color:#e4e4e4;white-space:nowrap">标注分类</div>
<div class="abs" style="left:867px;top:939px;width:150px;height:28px;background:#5c5c5c;border:1px solid #333;border-radius:2px"></div>
<div class="abs" style="left:873px;top:946px;width:13px;height:13px;background:#ffff00;border:1px solid #333"></div>
<div class="abs" style="left:890px;top:945px;font-size:12px;line-height:15px;color:#eee;white-space:nowrap">2500*320</div>
<svg class="abs" style="left:1005px;top:948px" width="10" height="8"><path d="M1 1h8l-4 5z" fill="#fff"/></svg>
<div class="abs" style="left:1020px;top:942px;width:1px;height:22px;background:#555"></div>
<svg class="abs" style="left:1027px;top:942px" width="115" height="22" viewBox="0 0 115 22" fill="none" stroke="#e6e6e6" stroke-width="1.3"><path d="M10 3.3H5.5Q3.6 3.3 3.6 5.2V16.3"/><path d="M2.2 6.5V18.3Q2.2 20.2 4.1 20.2H15.5Q17.3 20.2 17.3 18.3V14.5M15.8 6.5V15.8Q15.8 18.6 13.2 18.6H3.8"/><path d="M6.2 14.2L16.3 2.6Q17.2 1.7 18.2 2.6L19 3.4Q19.9 4.3 19 5.3L8.8 16.5 5.6 17.2Z"/><path d="M42 3V19M34 11H50M39.2 5.8L42 3 44.8 5.8M39.2 16.2L42 19 44.8 16.2M36.8 8.2L34 11 36.8 13.8M47.2 8.2L50 11 47.2 13.8"/><circle cx="42" cy="11" r="1" fill="#e6e6e6"/><path d="M69.5 5.8V4.6Q69.5 2.5 71.6 2.5H77.9Q80 2.5 80 4.6V13.9Q80 16 77.9 16H76.5"/><rect x="63.4" y="6.2" width="12.2" height="13.2" rx="2.2" fill="#646464"/><path d="M101.7 18H95.5Q93.5 18 93.5 16V6Q93.5 4.5 95.5 4.5H97M104 4.5H104.8Q106.7 4.5 106.7 6.5V9.9"/><rect x="97" y="2.5" width="7" height="3.8" rx="1.5"/><rect x="101.7" y="9.9" width="9.1" height="9.5" rx="1" fill="#646464"/></svg>
<div class="abs" style="left:0;top:99px;width:1px;height:886px;background:#cfcfcf"></div>
<div id="btabs" class="abs"></div>
<svg class="abs" style="left:0;top:985px" width="1920" height="22" viewBox="0 985 1920 22"><path d="M1 985V1005.5H1920" stroke="#333" fill="none"/><path d="M3 985L10 1004H62L68 985z" fill="#000"/><path d="M68 985L73 1003H253L258 985" fill="#fff" stroke="#555"/></svg>
<div class="abs" style="left:23px;top:988px;font-size:12px;line-height:15px;color:#fff">模型</div>
<div class="abs" style="left:76px;top:988px;font-size:12px;line-height:15px;color:#1f2a44;white-space:nowrap;letter-spacing:0.2px">00-DH-D01-地下一层通风防排...</div>
<div id="status" class="abs"></div>
<div class="abs" style="left:9px;top:1013px;font-family:'Liberation Mono',monospace;font-size:11px;line-height:15px;color:#111;white-space:nowrap;letter-spacing:-0.22px">x = 11182726 y = 1013404</div>
<div class="abs" style="left:327px;top:1007px;width:1px;height:24px;background:#d5d2ce"></div>
<div class="abs" style="left:495px;top:1007px;width:1px;height:24px;background:#d5d2ce"></div>
<div class="abs" style="left:499px;top:1012px;font-size:12px;line-height:15px;color:#111;white-space:nowrap">模型中的标注比例:1</div>
<div class="abs" style="left:0;top:1031px;width:1920px;height:2px;background:#aab4c0"></div>
<div class="abs" style="left:1728px;top:999px;width:190px;height:31px;background:#fff;border:1px solid #e4e4e4;border-radius:7px"></div>
<svg class="abs" style="left:1734px;top:1004px" width="182" height="24" viewBox="1734 1004 182 24"><path d="M1753.5 1009.3C1749 1007.8 1742 1008 1740.5 1011.3 1739.6 1013.6 1744 1014.3 1747.5 1014.9 1751.5 1015.6 1752.5 1018 1749.8 1020.3 1747 1022.3 1742.5 1022.3 1739.2 1021.2" fill="none" stroke="#ff7310" stroke-width="3.6" stroke-linecap="round"/><path d="M1764.5 1007v16" stroke="#ccc"/><path d="M1775.5 1011h14v7h-14zM1782.5 1007v17" fill="none" stroke="#111" stroke-width="1.6"/><circle cx="1807" cy="1011" r="2" fill="none" stroke="#111" stroke-width="1.2"/><circle cx="1812.3" cy="1016.8" r="1.7" fill="#111"/><path d="M1813.6 1017c.2 1.8-.5 3-1.8 3.8" stroke="#111" stroke-width="1.3" fill="none"/><rect x="1833.5" y="1007" width="7" height="11" rx="3.5" fill="none" stroke="#111" stroke-width="1.4"/><path d="M1831 1014.5a6 6 0 0 0 12 0M1837 1020.5v3" fill="none" stroke="#111" stroke-width="1.4"/><rect x="1861" y="1008" width="16" height="14" rx="1.5" fill="none" stroke="#111" stroke-width="1.7"/><path d="M1864 1012h1M1867 1012h1M1870 1012h1M1873 1012h1M1864 1015h1M1867 1015h1M1870 1015h1M1873 1015h1M1865 1018.5h8" stroke="#111" stroke-width="1.2"/><defs><linearGradient id="sh" x1="0" y1="0" x2="1" y2="1"><stop offset="0" stop-color="#ff6a5a"/><stop offset=".5" stop-color="#9a6af0"/><stop offset="1" stop-color="#50d0ff"/></linearGradient></defs><path d="M1893 1011l4-2h7l4 2-1 4h-2v8h-9v-8h-2z" fill="url(#sh)"/><circle cx="1908" cy="1007.5" r="4" fill="#f24a3a"/></svg>
</body></html>
